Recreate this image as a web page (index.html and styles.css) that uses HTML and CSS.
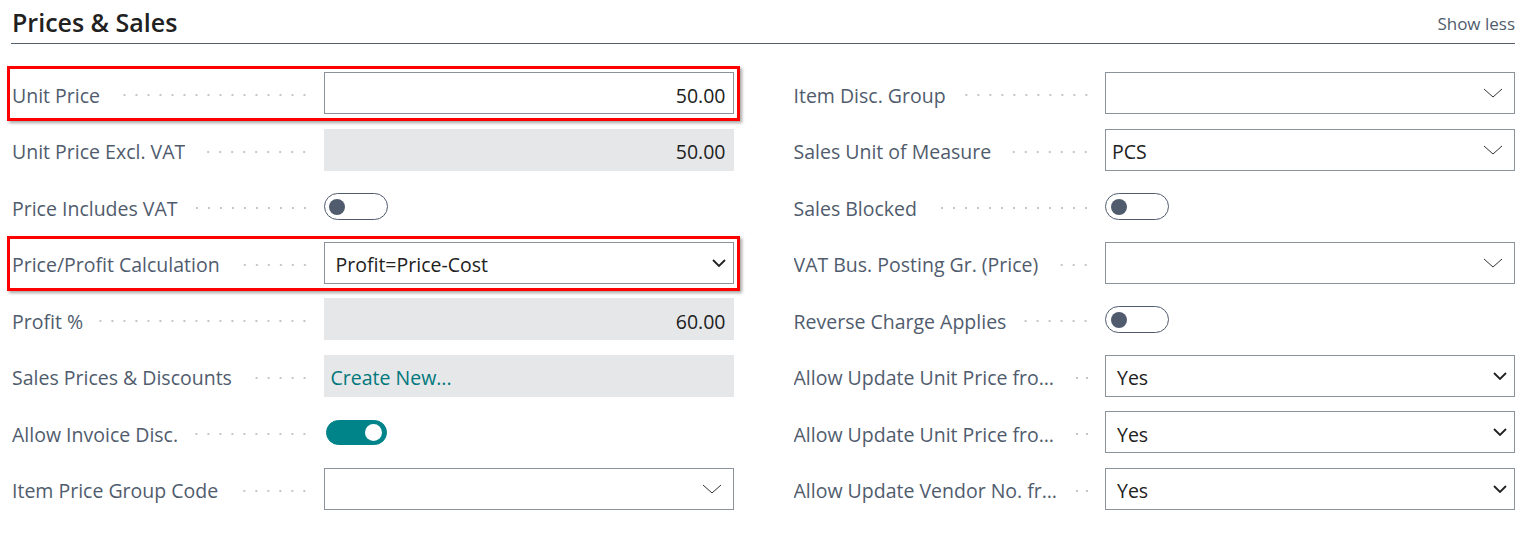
FILE: index.html
```html
<!DOCTYPE html>
<html lang="en">
<head>
<meta charset="utf-8">
<title>Prices &amp; Sales</title>
<link rel="stylesheet" href="styles.css">
</head>
<body>
<div class="page">
  <header class="section-head">
    <h2 class="title">Prices &amp; Sales</h2>
    <span class="show-less">Show less</span>
  </header>
  <div class="columns">
    <div class="col">
      <div class="row hl">
        <div class="label"><span class="ltext">Unit Price</span><span class="dots"></span></div>
        <div class="field input num"><span class="val">50.00</span></div>
      </div>
      <div class="row">
        <div class="label"><span class="ltext">Unit Price Excl. VAT</span><span class="dots"></span></div>
        <div class="field ro num"><span class="val">50.00</span></div>
      </div>
      <div class="row">
        <div class="label"><span class="ltext">Price Includes VAT</span><span class="dots"></span></div>
        <div class="fieldwrap"><span class="toggle"><span class="knob"></span></span></div>
      </div>
      <div class="row hl">
        <div class="label"><span class="ltext">Price/Profit Calculation</span><span class="dots"></span></div>
        <div class="field select"><span class="val">Profit=Price-Cost</span><svg class="chev-bold" width="14" height="8" viewBox="0 0 14 8"><path d="M1 1 L7 7 L13 1" fill="none" stroke="#212121" stroke-width="1.8"/></svg></div>
      </div>
      <div class="row">
        <div class="label"><span class="ltext">Profit %</span><span class="dots"></span></div>
        <div class="field ro num"><span class="val">60.00</span></div>
      </div>
      <div class="row">
        <div class="label"><span class="ltext">Sales Prices &amp; Discounts</span><span class="dots"></span></div>
        <div class="field ro link"><span class="val">Create New...</span></div>
      </div>
      <div class="row">
        <div class="label"><span class="ltext">Allow Invoice Disc.</span><span class="dots"></span></div>
        <div class="fieldwrap"><span class="toggle on"><span class="knob"></span></span></div>
      </div>
      <div class="row">
        <div class="label"><span class="ltext">Item Price Group Code</span><span class="dots"></span></div>
        <div class="field lookup"><span class="val"></span><svg class="chev-thin" width="20" height="10" viewBox="0 0 20 10"><path d="M1 1 L10 9 L19 1" fill="none" stroke="#333" stroke-width="1"/></svg></div>
      </div>
    </div>
    <div class="col">
      <div class="row">
        <div class="label"><span class="ltext">Item Disc. Group</span><span class="dots"></span></div>
        <div class="field lookup"><span class="val"></span><svg class="chev-thin" width="20" height="10" viewBox="0 0 20 10"><path d="M1 1 L10 9 L19 1" fill="none" stroke="#333" stroke-width="1"/></svg></div>
      </div>
      <div class="row">
        <div class="label"><span class="ltext">Sales Unit of Measure</span><span class="dots"></span></div>
        <div class="field lookup"><span class="val">PCS</span><svg class="chev-thin" width="20" height="10" viewBox="0 0 20 10"><path d="M1 1 L10 9 L19 1" fill="none" stroke="#333" stroke-width="1"/></svg></div>
      </div>
      <div class="row">
        <div class="label"><span class="ltext">Sales Blocked</span><span class="dots"></span></div>
        <div class="fieldwrap"><span class="toggle"><span class="knob"></span></span></div>
      </div>
      <div class="row">
        <div class="label"><span class="ltext">VAT Bus. Posting Gr. (Price)</span><span class="dots"></span></div>
        <div class="field lookup"><span class="val"></span><svg class="chev-thin" width="20" height="10" viewBox="0 0 20 10"><path d="M1 1 L10 9 L19 1" fill="none" stroke="#333" stroke-width="1"/></svg></div>
      </div>
      <div class="row">
        <div class="label"><span class="ltext">Reverse Charge Applies</span><span class="dots"></span></div>
        <div class="fieldwrap"><span class="toggle"><span class="knob"></span></span></div>
      </div>
      <div class="row">
        <div class="label"><span class="ltext">Allow Update Unit Price from Sales Price List</span><span class="dots short"></span></div>
        <div class="field select"><span class="val">Yes</span><svg class="chev-bold" width="14" height="8" viewBox="0 0 14 8"><path d="M1 1 L7 7 L13 1" fill="none" stroke="#212121" stroke-width="1.8"/></svg></div>
      </div>
      <div class="row">
        <div class="label"><span class="ltext">Allow Update Unit Price from Purchase Price List</span><span class="dots short"></span></div>
        <div class="field select"><span class="val">Yes</span><svg class="chev-bold" width="14" height="8" viewBox="0 0 14 8"><path d="M1 1 L7 7 L13 1" fill="none" stroke="#212121" stroke-width="1.8"/></svg></div>
      </div>
      <div class="row">
        <div class="label"><span class="ltext">Allow Update Vendor No. from Purchase Price List</span><span class="dots short"></span></div>
        <div class="field select"><span class="val">Yes</span><svg class="chev-bold" width="14" height="8" viewBox="0 0 14 8"><path d="M1 1 L7 7 L13 1" fill="none" stroke="#212121" stroke-width="1.8"/></svg></div>
      </div>
    </div>
  </div>
</div>
</body>
</html>
```
FILE: styles.css
```css
* { box-sizing: border-box; }
html, body { margin: 0; padding: 0; background: #fff; }
body {
  font-family: "Open Sans", "Noto Sans", "Liberation Sans", sans-serif;
  color: #212121;
}
.page { padding: 0 20px 0 11px; }

.section-head {
  display: flex;
  align-items: flex-end;
  justify-content: space-between;
  height: 44px;
  border-bottom: 1px solid #566270;
  padding: 0 0 5px 1px;
}
.title {
  margin: 0;
  font-size: 25px;
  font-weight: 600;
  line-height: 32px;
  color: #212121;
}
.show-less {
  font-size: 17px;
  color: #505c6d;
  line-height: 22px;
  margin-bottom: 3px;
}

.columns {
  display: grid;
  grid-template-columns: 1fr 1fr;
  column-gap: 60px;
  padding-left: 1px;
  margin-top: 28px;
}
.col {
  display: flex;
  flex-direction: column;
  gap: 14.5px;
}
.row {
  display: grid;
  grid-template-columns: 1fr 410px;
  column-gap: 11px;
  height: 42px;
  align-items: center;
  position: relative;
}
.row.hl::after {
  content: "";
  position: absolute;
  left: -5px; right: -6px; top: -6px; bottom: -7px;
  border: 3px solid #ff0000;
  box-shadow: 2px 2px 3px rgba(0,0,0,0.35);
  pointer-events: none;
}
.label {
  display: flex;
  align-items: center;
  min-width: 0;
  padding-top: 4px;
  font-size: 19.5px;
  color: #505c6d;
}
.ltext {
  white-space: nowrap;
  overflow: hidden;
  text-overflow: ellipsis;
  flex: 0 1 auto;
  min-width: 0;
}
.dots {
  flex: 1 0 24px;
  height: 4px;
  margin-left: 16px;
  margin-right: 2px;
  background-image: radial-gradient(circle, #c4c6ca 1px, transparent 1.3px);
  background-size: 12px 4px;
  background-repeat: repeat-x;
  background-position: right center;
}
.dots.short { flex-basis: 22px; margin-left: 10px; background-size: 10px 4px; }
.field {
  height: 42px;
  display: flex;
  align-items: center;
  font-size: 19.5px;
  color: #212121;
}
.val { display: block; padding-top: 4px; white-space: nowrap; }
.input { border: 1px solid #8a929c; background: #fff; justify-content: flex-end; padding-right: 7px; }
.ro { background: #e6e7e9; }
.ro.num { justify-content: flex-end; padding-right: 8px; }
.ro.link { padding-left: 7px; color: #00777c; }
.select {
  border: 1px solid #8a929c;
  justify-content: space-between;
  padding: 0 7px 0 11px;
}
.lookup {
  border: 1px solid #8a929c;
  justify-content: space-between;
  padding: 0 11px 0 6px;
}
.chev-bold, .chev-thin { flex: none; display: block; }

.fieldwrap { display: flex; align-items: center; height: 42px; padding-top: 1px; }
.toggle {
  width: 64px;
  height: 27px;
  border: 1.5px solid #505c6d;
  border-radius: 14px;
  display: flex;
  align-items: center;
  padding-left: 4.5px;
}
.knob {
  width: 16px;
  height: 16px;
  border-radius: 50%;
  background: #505c6d;
}
.toggle.on {
  width: 61px;
  height: 25px;
  margin-left: 2px;
  background: #008489;
  border-color: #008489;
  justify-content: flex-end;
  padding: 0 4px 0 0;
}
.toggle.on .knob { background: #fff; width: 17px; height: 17px; }
```
